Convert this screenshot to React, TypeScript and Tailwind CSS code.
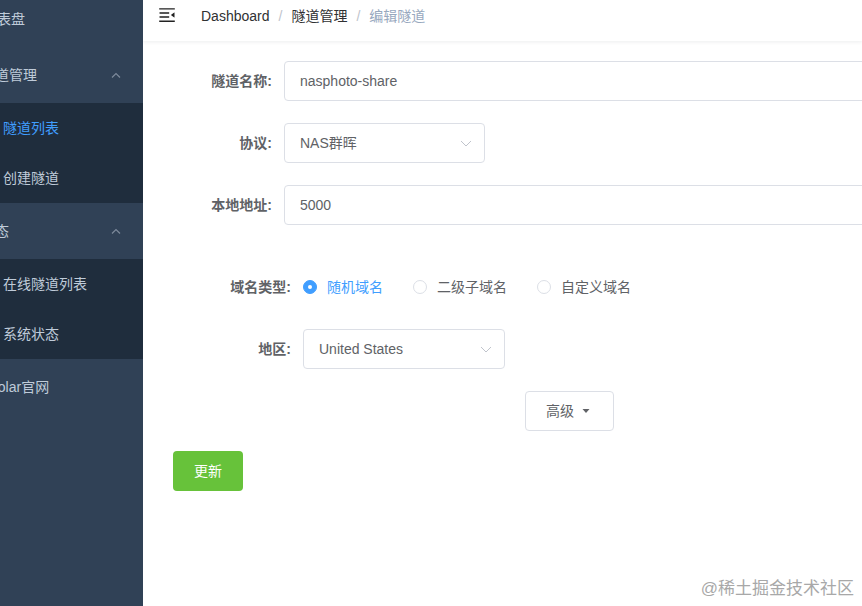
import React from "react";

const FONT = { fontFamily: '"Liberation Sans", "Noto Sans CJK SC", sans-serif' };

function ChevronUp() {
  return (
    <svg width="10" height="6" viewBox="0 0 10 6" className="shrink-0">
      <polyline points="1,5.5 5,1.5 9,5.5" fill="none" stroke="#7d8a9b" strokeWidth="1.2" />
    </svg>
  );
}

function ChevronDown() {
  return (
    <svg width="12" height="7" viewBox="0 0 12 7" className="shrink-0">
      <polyline points="1,1 6,6 11,1" fill="none" stroke="#c0c4cc" strokeWidth="1" />
    </svg>
  );
}

function Hamburger() {
  return (
    <svg width="20" height="20" viewBox="0 0 1024 1024" className="rotate-180" fill="#222">
      <path d="M408 442h480c4.4 0 8-3.6 8-8v-56c0-4.4-3.6-8-8-8H408c-4.4 0-8 3.6-8 8v56c0 4.4 3.6 8 8 8zm-8 204c0 4.4 3.6 8 8 8h480c4.4 0 8-3.6 8-8v-56c0-4.4-3.6-8-8-8H408c-4.4 0-8 3.6-8 8v56zm504-486H120c-4.4 0-8 3.6-8 8v56c0 4.4 3.6 8 8 8h784c4.4 0 8-3.6 8-8v-56c0-4.4-3.6-8-8-8zm0 632H120c-4.4 0-8 3.6-8 8v56c0 4.4 3.6 8 8 8h784c4.4 0 8-3.6 8-8v-56c0-4.4-3.6-8-8-8zM142.4 642.1L298.7 519a8.840 8.840 0 0 0 0-13.9L142.4 381.9c-5.8-4.6-14.4-.5-14.4 6.9v246.3a8.8 8.8 0 0 0 14.4 7z" />
    </svg>
  );
}

function Radio({ label, checked }: { label: string; checked?: boolean }) {
  return (
    <div className="flex items-center mr-[30px]">
      {checked ? (
        <span className="w-[14px] h-[14px] rounded-full bg-[#409eff] border border-[#409eff] flex items-center justify-center">
          <span className="w-[4px] h-[4px] rounded-full bg-white" />
        </span>
      ) : (
        <span className="w-[14px] h-[14px] rounded-full bg-white border border-[#dcdfe6]" />
      )}
      <span className={`ml-[10px] text-[14px] ${checked ? "text-[#409eff]" : "text-[#606266]"}`}>{label}</span>
    </div>
  );
}

export default function App() {
  return (
    <div className="flex w-[862px] h-[606px] overflow-hidden bg-white" style={FONT}>
      <aside className="w-[143px] shrink-0 bg-[#304156] overflow-hidden h-full">
        <div className="mt-[-9px] text-[14px] text-[#bfcbd9] whitespace-nowrap">
          <div className="h-[56px] flex items-center">
            <span className="ml-[-17px]">仪表盘</span>
          </div>
          <div className="h-[56px] flex items-center justify-between pr-[22px]">
            <span className="ml-[-19px]">隧道管理</span>
            <ChevronUp />
          </div>
          <div className="bg-[#1f2d3d]">
            <div className="h-[50px] flex items-center">
              <span className="ml-[3px] text-[#409eff]">隧道列表</span>
            </div>
            <div className="h-[50px] flex items-center">
              <span className="ml-[3px]">创建隧道</span>
            </div>
          </div>
          <div className="h-[56px] flex items-center justify-between pr-[22px]">
            <span className="ml-[-19px]">状态</span>
            <ChevronUp />
          </div>
          <div className="bg-[#1f2d3d]">
            <div className="h-[50px] flex items-center">
              <span className="ml-[3px]">在线隧道列表</span>
            </div>
            <div className="h-[50px] flex items-center">
              <span className="ml-[3px]">系统状态</span>
            </div>
          </div>
          <div className="h-[56px] flex items-center">
            <span className="ml-[-17px]">cpolar官网</span>
          </div>
        </div>
      </aside>

      <main className="flex-1 relative overflow-hidden">
        <div className="h-[50px] mt-[-9px] flex items-center shadow-[0_1px_4px_rgba(0,21,41,0.08)] bg-white">
          <div className="ml-[14px] mt-[-3px]">
            <Hamburger />
          </div>
          <div className="ml-[24px] flex items-center text-[14px]">
            <span className="text-[#303133]">Dashboard</span>
            <span className="mx-[9px] text-[#c0c4cc]">/</span>
            <span className="text-[#303133]">隧道管理</span>
            <span className="mx-[9px] text-[#c0c4cc]">/</span>
            <span className="text-[#97a8be]">编辑隧道</span>
          </div>
        </div>

        <div className="pt-[20px] pl-[30px] flex flex-col">
          <div className="flex items-center h-[40px] mb-[22px]">
            <label className="w-[111px] shrink-0 text-right pr-[12px] text-[14px] font-bold text-[#606266]">隧道名称:</label>
            <div className="w-[640px] shrink-0 h-[40px] border border-[#dcdfe6] rounded-[4px] flex items-center px-[15px] text-[14px] text-[#606266]">
              nasphoto-share
            </div>
          </div>
          <div className="flex items-center h-[40px] mb-[22px]">
            <label className="w-[111px] shrink-0 text-right pr-[12px] text-[14px] font-bold text-[#606266]">协议:</label>
            <div className="w-[201px] shrink-0 h-[40px] border border-[#dcdfe6] rounded-[4px] flex items-center justify-between pl-[15px] pr-[12px] text-[14px] text-[#606266]">
              <span>NAS群晖</span>
              <ChevronDown />
            </div>
          </div>
          <div className="flex items-center h-[40px] mb-[42px]">
            <label className="w-[111px] shrink-0 text-right pr-[12px] text-[14px] font-bold text-[#606266]">本地地址:</label>
            <div className="w-[640px] shrink-0 h-[40px] border border-[#dcdfe6] rounded-[4px] flex items-center px-[15px] text-[14px] text-[#606266]">
              5000
            </div>
          </div>

          <div className="flex items-center h-[40px] mb-[22px]">
            <label className="w-[130px] shrink-0 text-right pr-[12px] text-[14px] font-bold text-[#606266]">域名类型:</label>
            <div className="flex items-center">
              <Radio label="随机域名" checked />
              <Radio label="二级子域名" />
              <Radio label="自定义域名" />
            </div>
          </div>
          <div className="flex items-center h-[40px] mb-[22px]">
            <label className="w-[130px] shrink-0 text-right pr-[12px] text-[14px] font-bold text-[#606266]">地区:</label>
            <div className="w-[202px] shrink-0 h-[40px] border border-[#dcdfe6] rounded-[4px] flex items-center justify-between pl-[15px] pr-[12px] text-[14px] text-[#606266]">
              <span>United States</span>
              <ChevronDown />
            </div>
          </div>

          <div className="flex mb-[20px]">
            <button className="ml-[352px] w-[89px] h-[40px] border border-[#dcdfe6] rounded-[4px] bg-white flex items-center justify-center text-[14px] text-[#606266]">
              <span>高级</span>
              <svg width="14" height="14" viewBox="0 0 14 14" className="ml-[5px]">
                <polygon points="3.5,5 10.5,5 7,9" fill="#606266" />
              </svg>
            </button>
          </div>

          <button className="w-[70px] h-[40px] rounded-[4px] bg-[#67c23a] text-white text-[14px] flex items-center justify-center">
            更新
          </button>
        </div>

        <div className="absolute right-[8px] bottom-[5px] text-[17px] text-[#a8a8a8] whitespace-nowrap">
          @稀土掘金技术社区
        </div>
      </main>
    </div>
  );
}
